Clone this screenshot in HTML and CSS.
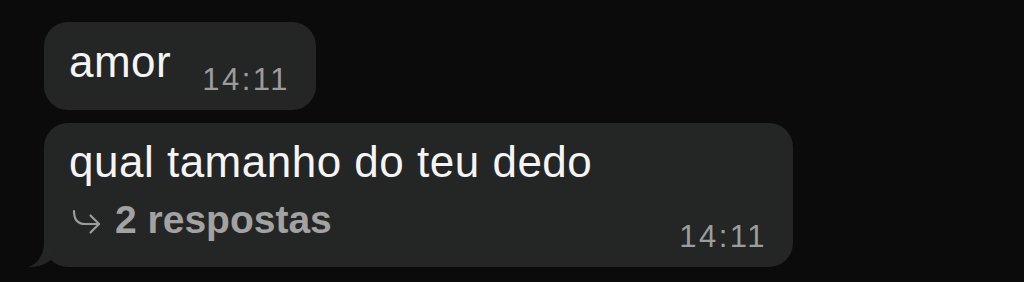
FILE: index.html
```html
<!DOCTYPE html>
<html lang="pt">
<head>
    <meta charset="UTF-8">
    <meta name="viewport" content="width=device-width, initial-scale=1.0">
    <title>Conversa</title>
    <link rel="stylesheet" href="styles.css">
</head>
<body>
    <div class="chat">
        <div class="bubble short">
            <span class="text">amor</span>
            <span class="time">14:11</span>
        </div>
        <div class="bubble long">
            <div class="text">qual tamanho do teu dedo</div>
            <div class="footer">
                <div class="replies">
                    <svg class="reply-icon" width="30" height="26" viewBox="0 0 30 26">
                        <path d="M3 2 C3 10 6 15 14 15 L28 15" />
                        <path d="M19.5 6.5 L28 15 L19.5 23.5" />
                    </svg>
                    <span>2 respostas</span>
                </div>
                <span class="time">14:11</span>
            </div>
            <svg class="tail" width="40" height="45" viewBox="0 0 40 45">
                <path d="M16 0 L16 20 C16 33 10 42 0 45 C10 45.5 19 42 27 35 L30 0 Z" />
            </svg>
        </div>
    </div>
</body>
</html>
```

FILE: styles.css
```css
body {
    margin: 0;
    background-color: #0b0b0b;
    font-family: "Liberation Sans", Arial, sans-serif;
    color: #f4f4f4;
}
.chat {
    display: flex;
    flex-direction: column;
    align-items: flex-start;
    gap: 13px;
    padding: 22px 0 0 44px;
}
.bubble {
    position: relative;
    box-sizing: border-box;
    background-color: #242525;
    border-radius: 24px;
    padding: 14px 26px 15px 25px;
}
.short {
    display: flex;
    justify-content: space-between;
    align-items: flex-start;
    width: 272px;
}
.long {
    width: 749px;
    padding-top: 13px;
}
.text {
    font-size: 44px;
    line-height: 52px;
    letter-spacing: 0.5px;
}
.time {
    font-size: 31px;
    line-height: 30px;
    letter-spacing: 2.5px;
    color: #9c9c9c;
    margin-top: 29px;
}
.footer {
    display: flex;
    justify-content: space-between;
    align-items: flex-start;
    margin-top: 10px;
}
.footer .time {
    margin-top: 24px;
}
.replies {
    display: flex;
    align-items: flex-start;
    gap: 14px;
    padding-left: 2px;
    font-size: 39px;
    line-height: 44px;
    font-weight: bold;
    color: #a2a2a2;
}
.reply-icon {
    margin-top: 11px;
    fill: none;
    stroke: #9c9c9c;
    stroke-width: 2.2;
    stroke-linecap: round;
    stroke-linejoin: round;
}
.tail {
    position: absolute;
    left: -16px;
    bottom: 0;
    fill: #242525;
}
```
